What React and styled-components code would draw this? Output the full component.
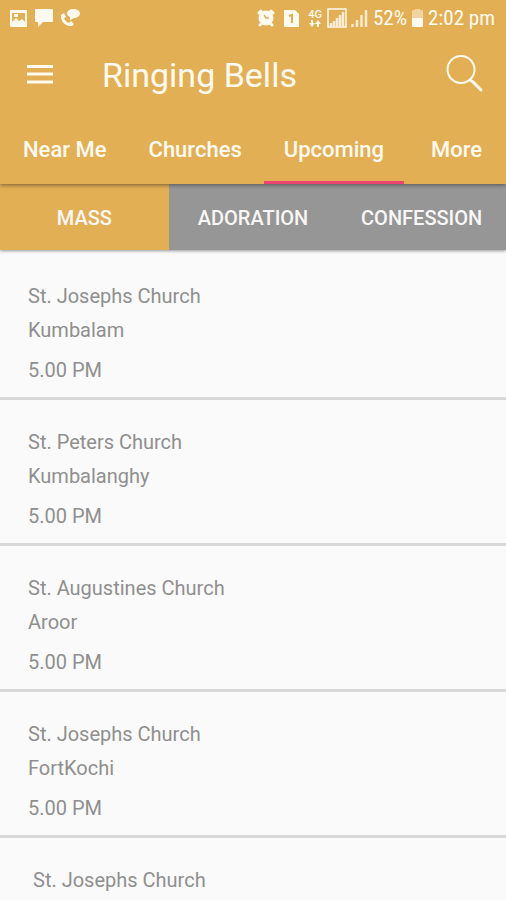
import React, { useState } from "react";
import styled, { createGlobalStyle } from "styled-components";

const GlobalStyle = createGlobalStyle`
  * { box-sizing: border-box; }
  html, body, #root { height: 100%; }
  body {
    margin: 0;
    background: #fafafa;
    font-family: Roboto, "Liberation Sans", sans-serif;
  }
  button { border: 0; padding: 0; background: none; font-family: inherit; cursor: pointer; }
`;

const Screen = styled.div`
  display: flex;
  flex-direction: column;
  height: 100vh;
  overflow: hidden;
`;

const Header = styled.header`
  position: relative;
  z-index: 1;
  flex: none;
  background: #e2af55;
  color: #fffaf0;
  box-shadow: 0 1px 4px rgba(40, 40, 40, 0.6);
`;

const StatusBar = styled.div`
  display: flex;
  justify-content: space-between;
  align-items: center;
  height: 36px;
  padding: 0 11px 0 10px;
`;

const StatusGroup = styled.div`
  display: flex;
  align-items: center;
  gap: ${(p) => p.$gap}px;
`;

const StatusText = styled.span`
  font-family: "Roboto Condensed", Roboto, sans-serif;
  font-size: 21px;
  line-height: 36px;
  white-space: nowrap;
`;

const Toolbar = styled.div`
  display: flex;
  align-items: center;
  height: 78px;
  padding: 0 22px 0 26px;
`;

const IconButton = styled.button`
  display: flex;
  color: inherit;
`;

const Title = styled.h1`
  flex: 1;
  margin: 0 0 0 48px;
  font-size: 34px;
  line-height: 40px;
  font-weight: 400;
`;

const Tabs = styled.nav`
  display: flex;
  gap: 2px;
  padding: 0 4px 0 3px;
`;

const Tab = styled.button`
  height: 70px;
  padding: 4px 20px 0;
  border-bottom: 3px solid ${(p) => (p.$active ? "#ec4573" : "transparent")};
  color: inherit;
  font-size: 22px;
  line-height: 26px;
  font-weight: 500;

  &:last-child {
    margin-left: auto;
  }
`;

const SubTabs = styled.nav`
  display: grid;
  grid-template-columns: repeat(3, 1fr);
  flex: none;
  background: #969696;
  box-shadow: 0 1px 3px rgba(0, 0, 0, 0.4);
`;

const SubTab = styled.button`
  height: 66px;
  padding-top: 2px;
  background: ${(p) => (p.$active ? "#e2af55" : "#969696")};
  color: #f8f7f5;
  font-size: 20px;
  line-height: 24px;
  font-weight: 500;
`;

const List = styled.ul`
  flex: 1;
  min-height: 0;
  margin: 0;
  padding: 4px 0 0;
  overflow: hidden;
  list-style: none;
`;

const Row = styled.li`
  padding: 25px 28px 10px ${(p) => (p.$indented ? 33 : 28)}px;
  border-bottom: 3px solid #d8d8d8;
  color: #8f8f8f;
  font-size: 20px;
  line-height: 34px;
`;

const Line = styled.div``;

const Time = styled.div`
  margin-top: 6px;
`;

const PictureIcon = () => (
  <svg width="17" height="17" viewBox="0 0 17 17" aria-hidden="true">
    <path fill="currentColor" fillRule="evenodd" d="M1 0h15a1 1 0 0 1 1 1v15a1 1 0 0 1-1 1H1a1 1 0 0 1-1-1V1a1 1 0 0 1 1-1ZM2 3v9l4-4 3 3 3-2 3 3V3ZM4 4h4v3H4Z" />
  </svg>
);

const ChatIcon = () => (
  <svg width="18" height="18" viewBox="0 0 18 18" aria-hidden="true">
    <path fill="currentColor" d="M1 0h16a1 1 0 0 1 1 1v11a1 1 0 0 1-1 1H8l-5 5v-5H1a1 1 0 0 1-1-1V1a1 1 0 0 1 1-1Z" />
  </svg>
);

const CallIcon = () => (
  <svg width="19" height="18" viewBox="0 0 19 18" fill="currentColor" aria-hidden="true">
    <path d="M12.500 0C16 0 19 2 19 4.500S16 9 13 9L9 11.500V8C7 7 6 6 6 4.500 6 2 9 0 12.500 0Z" />
    <path d="M0 6 3 4l2 4-2 1c1 3 3 4 5 5l2-2 3 3-2 2C5 18-1 12 0 6Z" />
  </svg>
);

const AlarmIcon = () => (
  <svg width="18" height="18" viewBox="0 0 18 18" aria-hidden="true">
    <g stroke="currentColor" strokeWidth="3" strokeLinecap="round">
      <path d="M2 4 4 2M16 4l-2-2M4 15l-1 1M14 15l1 1" />
    </g>
    <circle cx="9" cy="9" r="7.500" fill="currentColor" />
    <path d="M7 6l2 3h3" fill="none" stroke="#e2af55" strokeWidth="1.500" />
  </svg>
);

const SimIcon = () => (
  <svg width="15" height="17" viewBox="0 0 15 17" aria-hidden="true">
    <path d="M1 0h10l4 4v12a1 1 0 0 1-1 1H1a1 1 0 0 1-1-1V1a1 1 0 0 1 1-1Z" fill="currentColor" />
    <path d="M5 6l3-1v8" fill="none" stroke="#e2af55" strokeWidth="2" />
  </svg>
);

const Network = styled.div`
  display: flex;
  flex-direction: column;
  align-items: center;
  font-size: 11px;
  line-height: 10px;
  font-weight: 500;
`;

const ArrowsIcon = () => (
  <svg width="12" height="7" viewBox="0 0 12 7" fill="currentColor" aria-hidden="true">
    <path d="M2 0h2v3h2L3 7 0 3h2ZM8 7V4H6l3-4 3 4h-2v3Z" />
  </svg>
);

const BoxedSignalIcon = () => (
  <svg width="20" height="20" viewBox="0 0 20 20" aria-hidden="true">
    <rect x="1" y="1" width="18" height="18" fill="none" stroke="currentColor" strokeWidth="1.500" />
    <path d="M4 18v-3M7 18v-5M10 18V10M13 18V7M16 18V4" stroke="currentColor" strokeWidth="2.500" opacity="0.85" />
  </svg>
);

const SignalIcon = () => (
  <svg width="17" height="18" viewBox="0 0 17 18" aria-hidden="true">
    <path d="M1.500 18v-3M6 18v-7M10.500 18V6M15 18V1" stroke="currentColor" strokeWidth="2.500" opacity="0.8" />
  </svg>
);

const BatteryIcon = () => (
  <svg width="11" height="18" viewBox="0 0 11 18" aria-hidden="true">
    <path d="M3 0h5v1h2a1 1 0 0 1 1 1v7H0V2a1 1 0 0 1 1-1h2Z" fill="currentColor" opacity="0.5" />
    <path d="M0 9h11v8a1 1 0 0 1-1 1H1a1 1 0 0 1-1-1Z" fill="currentColor" />
  </svg>
);

const MenuIcon = () => (
  <svg width="28" height="20" viewBox="0 0 28 20" aria-hidden="true">
    <path d="M1 1.500h26M1 9h26M1 17h26" stroke="currentColor" strokeWidth="3" />
  </svg>
);

const SearchIcon = () => (
  <svg width="38" height="40" viewBox="0 0 38 40" fill="none" stroke="currentColor" aria-hidden="true">
    <circle cx="15" cy="14.500" r="13.500" strokeWidth="2" />
    <path d="m24 25 3 2 8 8" strokeWidth="3" strokeLinecap="round" />
  </svg>
);

const tabs = ["Near Me", "Churches", "Upcoming", "More"];
const services = ["MASS", "ADORATION", "CONFESSION"];
const masses = [
  { church: "St. Josephs Church", place: "Kumbalam", time: "5.00 PM" },
  { church: "St. Peters Church", place: "Kumbalanghy", time: "5.00 PM" },
  { church: "St. Augustines Church", place: "Aroor", time: "5.00 PM" },
  { church: "St. Josephs Church", place: "FortKochi", time: "5.00 PM" },
  { church: "St. Josephs Church", indented: true },
];

export default function App() {
  const [tab, setTab] = useState("Upcoming");
  const [service, setService] = useState("MASS");

  return (
    <Screen>
      <GlobalStyle />
      <Header>
        <StatusBar>
          <StatusGroup $gap={8}>
            <PictureIcon />
            <ChatIcon />
            <CallIcon />
          </StatusGroup>
          <StatusGroup $gap={5}>
            <StatusGroup $gap={9}>
              <AlarmIcon />
              <SimIcon />
              <Network>
                4G
                <ArrowsIcon />
              </Network>
            </StatusGroup>
            <StatusGroup $gap={4}>
              <BoxedSignalIcon />
              <SignalIcon />
            </StatusGroup>
            <StatusText>52%</StatusText>
            <BatteryIcon />
            <StatusText>2:02 pm</StatusText>
          </StatusGroup>
        </StatusBar>
        <Toolbar>
          <IconButton type="button" aria-label="Menu">
            <MenuIcon />
          </IconButton>
          <Title>Ringing Bells</Title>
          <IconButton type="button" aria-label="Search">
            <SearchIcon />
          </IconButton>
        </Toolbar>
        <Tabs>
          {tabs.map((name) => (
            <Tab key={name} type="button" $active={name === tab} onClick={() => setTab(name)}>
              {name}
            </Tab>
          ))}
        </Tabs>
      </Header>
      <SubTabs>
        {services.map((name) => (
          <SubTab key={name} type="button" $active={name === service} onClick={() => setService(name)}>
            {name}
          </SubTab>
        ))}
      </SubTabs>
      <List>
        {masses.map((mass, i) => (
          <Row key={i} $indented={mass.indented}>
            <Line>{mass.church}</Line>
            {mass.place && <Line>{mass.place}</Line>}
            {mass.time && <Time>{mass.time}</Time>}
          </Row>
        ))}
      </List>
    </Screen>
  );
}
